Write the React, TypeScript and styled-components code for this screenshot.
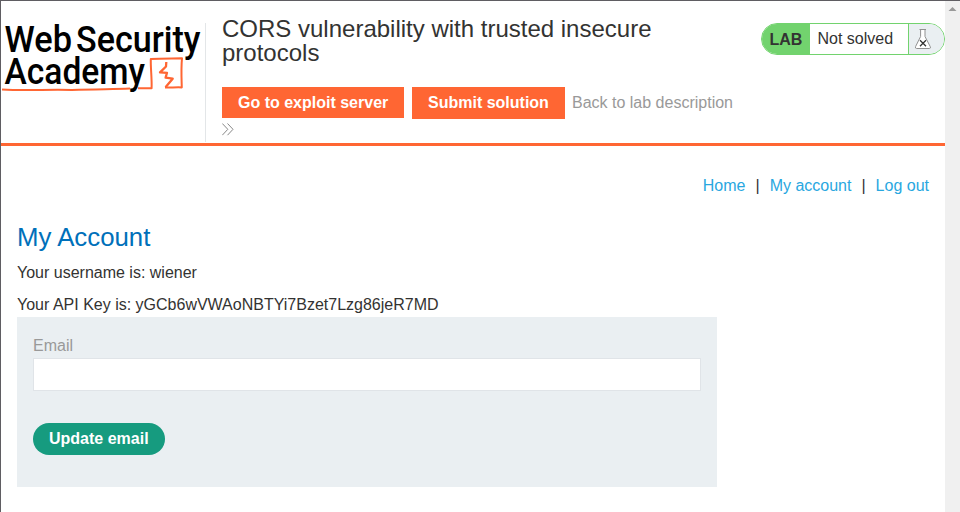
import React from 'react';
import styled, { createGlobalStyle } from 'styled-components';

const GlobalStyle = createGlobalStyle`
  * { box-sizing: border-box; }
  body {
    margin: 0;
    overflow: hidden;
    background: #fff;
    color: #333332;
    font: 16px/20px "Liberation Sans", Arial, sans-serif;
  }
`;

const Window = styled.div`
  display: flex;
  width: 960px;
  height: 512px;
  border-top: 1px solid #5f5d62;
  border-left: 1px solid #5f5d62;
`;

const Page = styled.div`
  width: 944px;
`;

const Scrollbar = styled.div`
  width: 15px;
  background: #f0f0f0;
  svg { display: block; }
`;

const Header = styled.header`
  display: flex;
  align-items: flex-start;
  height: 145px;
  border-bottom: 3px solid #ff6633;
`;

const Logo = styled.svg`
  display: block;
  flex: none;
  width: 204px;
  height: 104px;
`;

const Intro = styled.div`
  flex: 1;
  height: 119px;
  margin-top: 22px;
  padding-left: 16px;
  border-left: 1px solid #e3e6e8;
`;

const Title = styled.h2`
  width: 450px;
  margin: -6px 0 22px;
  font-size: 24px;
  font-weight: 400;
  line-height: 24px;
`;

const Actions = styled.div`
  display: flex;
  align-items: flex-start;
`;

const ActionButton = styled.a<{ $width: number; $height: number }>`
  width: ${p => p.$width}px;
  height: ${p => p.$height}px;
  margin-right: 8px;
  padding-left: 16px;
  background: #ff6633;
  color: #fff;
  font-weight: 700;
  line-height: 32px;
  white-space: nowrap;
`;

const BackLink = styled.a`
  margin-left: -1px;
  color: #999;
  line-height: 32px;
`;

const Chevrons = styled.svg`
  display: block;
  width: 12px;
  height: 13px;
  margin-top: 4px;
`;

const Status = styled.div`
  display: flex;
  flex: none;
  width: 184px;
  height: 32px;
  margin-top: 22px;
  overflow: hidden;
  border: 1px solid #72d36e;
  border-radius: 16px;
  line-height: 30px;
`;

const StatusTag = styled.span`
  width: 48px;
  padding: 1px 0 0 7.4px;
  background: #72d36e;
  font-weight: 700;
`;

const StatusText = styled.span`
  width: 99px;
  padding-left: 7.5px;
  border-right: 1px solid #72d36e;
`;

const StatusIcon = styled.span`
  flex: 1;
  padding: 4px 0 0 5px;
  background: #eaeff2;
  svg { display: block; }
`;

const Main = styled.main`
  padding: 0 16px;
`;

const Nav = styled.nav`
  display: flex;
  justify-content: flex-end;
  gap: 10px;
  padding-top: 30px;
  a { color: #29a7df; }
`;

const Heading = styled.h1`
  margin: 26px 0 11px;
  color: #0070ba;
  font-size: 25.8px;
  font-weight: 400;
  line-height: 30px;
`;

const Detail = styled.p`
  margin: 0 0 12px;
`;

const Form = styled.form`
  width: 700px;
  height: 170px;
  margin-top: -10px;
  padding: 19px 16px;
  background: #eaeff2;
`;

const Label = styled.label`
  display: block;
  color: #999;
`;

const Input = styled.input`
  display: block;
  width: 668px;
  height: 33px;
  margin: 2px 0 32px;
  padding: 0 8px;
  border: 1px solid #e0e4e8;
  border-radius: 0;
  background: #fff;
  font: inherit;
`;

const SubmitButton = styled.button`
  display: block;
  width: 132px;
  height: 32px;
  padding: 0 0 0 16px;
  border: 0;
  border-radius: 16px;
  background: #169b7f;
  color: #fff;
  font: inherit;
  font-weight: 700;
  text-align: left;
`;

const AcademyLogo = () => (
  <Logo viewBox="1 1 204 104">
    <g fill="#000" fontFamily="Roboto, sans-serif" fontSize="37.5" fontWeight="500">
      <text x="4.5" y="51.5" textLength="67.5" lengthAdjust="spacingAndGlyphs">Web</text>
      <text x="76" y="51.5" textLength="124.5" lengthAdjust="spacingAndGlyphs">Security</text>
      <text x="4.5" y="84" textLength="140.5" lengthAdjust="spacingAndGlyphs">Academy</text>
    </g>
    <g fill="none" stroke="#ff6633" strokeLinejoin="round">
      <path d="M2 89.5 C24 90.8 48 89.4 72 90 C95 89 110 89.3 130 88.6" strokeWidth="2" />
      <path d="M138 88.2 L151.6 88.2 C152 78 150.5 68 150.8 59 C161 58.2 171 58.5 182 58.3 C181 68 181.5 78 181.8 87.4 C176 87.2 171 87.6 165 87.5" strokeWidth="2" />
      <path d="M165.5 87.2 L172.7 78.7 L165.6 77.6 L167 72.8 L160 72.3 L166 66.5 L166.3 62" strokeWidth="2.3" />
    </g>
  </Logo>
);

export default function App() {
  return (
    <>
      <GlobalStyle />
      <Window>
        <Page>
          <Header>
            <AcademyLogo />
            <Intro>
              <Title>CORS vulnerability with trusted insecure protocols</Title>
              <Actions>
                <ActionButton $width={182} $height={31}>Go to exploit server</ActionButton>
                <ActionButton $width={153} $height={32}>Submit solution</ActionButton>
                <BackLink>Back to lab description</BackLink>
              </Actions>
              <Chevrons viewBox="0 0 12 13" fill="none" stroke="#888">
                <path d="M.3 .5 L5.8 6.3 L.3 12.2 M5.5 .5 L11 6.3 L5.5 12.2" strokeWidth="1" />
              </Chevrons>
            </Intro>
            <Status>
              <StatusTag>LAB</StatusTag>
              <StatusText>Not solved</StatusText>
              <StatusIcon>
                <svg width="18" height="22" viewBox="0 0 18 22" fill="none">
                  <path d="M5.5 1.5 H12 M6.6 2 V8.5 L1.6 18.5 Q1 20.5 2.5 20.5 H15.5 Q17 20.5 16.2 18.5 L11 8.5 V2" fill="#fff" stroke="#919191" />
                  <path d="M6 12.2 L12 18.2 M12 12.2 L6 18.2" stroke="#333332" strokeWidth="1.3" />
                </svg>
              </StatusIcon>
            </Status>
          </Header>
          <Main>
            <Nav>
              <a>Home</a><span>|</span><a>My account</a><span>|</span><a>Log out</a>
            </Nav>
            <Heading>My Account</Heading>
            <Detail>Your username is: wiener</Detail>
            <Detail>Your API Key is: yGCb6wVWAoNBTYi7Bzet7Lzg86jeR7MD</Detail>
            <Form>
              <Label htmlFor="email">Email</Label>
              <Input id="email" type="email" />
              <SubmitButton type="button">Update email</SubmitButton>
            </Form>
          </Main>
        </Page>
        <Scrollbar>
          <svg width="15" height="15" viewBox="0 0 15 15"><path d="M3.5 10 L7.5 6 L11.5 10 Z" fill="#999" /></svg>
        </Scrollbar>
      </Window>
    </>
  );
}
